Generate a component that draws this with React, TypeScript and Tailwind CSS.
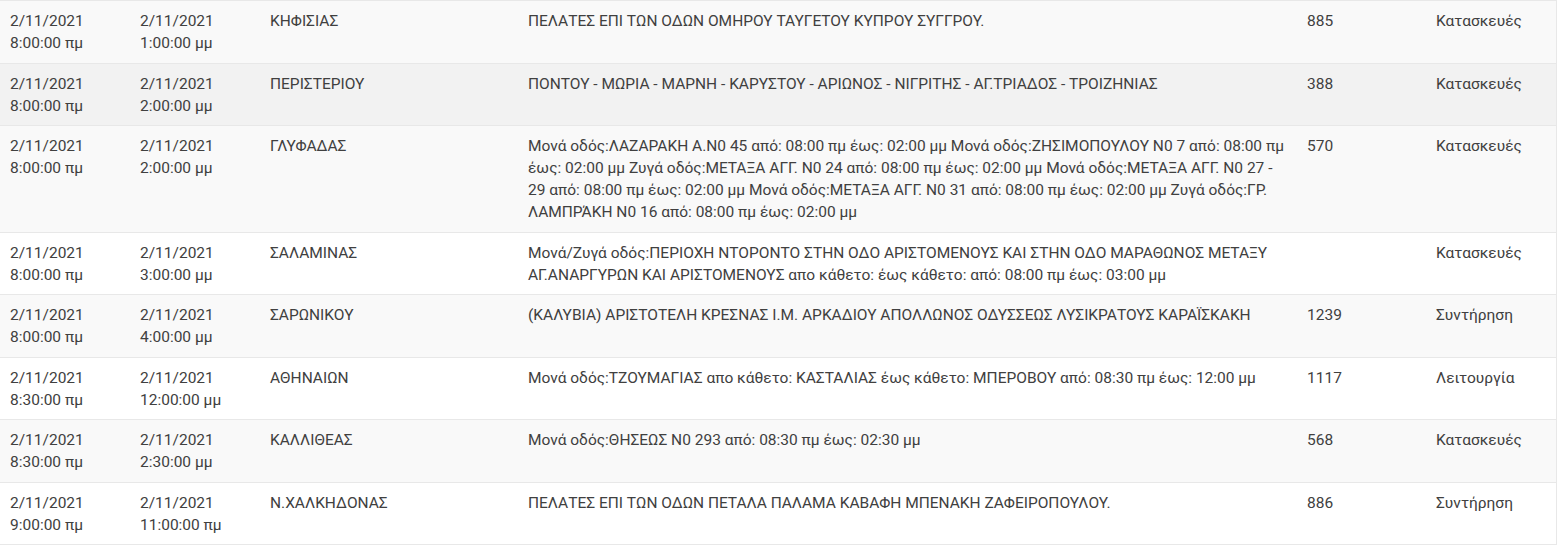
type Row = {
  start: [string, string];
  end: [string, string];
  area: string;
  desc: string;
  count: string;
  kind: string;
};

const rows: Row[] = [
  {
    start: ["2/11/2021", "8:00:00 πμ"],
    end: ["2/11/2021", "1:00:00 μμ"],
    area: "ΚΗΦΙΣΙΑΣ",
    desc: "ΠΕΛΑΤΕΣ ΕΠΙ ΤΩΝ ΟΔΩΝ ΟΜΗΡΟΥ ΤΑΥΓΕΤΟΥ ΚΥΠΡΟΥ ΣΥΓΓΡΟΥ.",
    count: "885",
    kind: "Κατασκευές",
  },
  {
    start: ["2/11/2021", "8:00:00 πμ"],
    end: ["2/11/2021", "2:00:00 μμ"],
    area: "ΠΕΡΙΣΤΕΡΙΟΥ",
    desc: "ΠΟΝΤΟΥ - ΜΩΡΙΑ - ΜΑΡΝΗ - ΚΑΡΥΣΤΟΥ - ΑΡΙΩΝΟΣ - ΝΙΓΡΙΤΗΣ - ΑΓ.ΤΡΙΑΔΟΣ - ΤΡΟΙΖΗΝΙΑΣ",
    count: "388",
    kind: "Κατασκευές",
  },
  {
    start: ["2/11/2021", "8:00:00 πμ"],
    end: ["2/11/2021", "2:00:00 μμ"],
    area: "ΓΛΥΦΑΔΑΣ",
    desc: "Μονά οδός:ΛΑΖΑΡΑΚΗ Α.Ν0 45 από: 08:00 πμ έως: 02:00 μμ Μονά οδός:ΖΗΣΙΜΟΠΟΥΛΟΥ Ν0 7 από: 08:00 πμ έως: 02:00 μμ Ζυγά οδός:ΜΕΤΑΞΑ ΑΓΓ. Ν0 24 από: 08:00 πμ έως: 02:00 μμ Μονά οδός:ΜΕΤΑΞΑ ΑΓΓ. Ν0 27 - 29 από: 08:00 πμ έως: 02:00 μμ Μονά οδός:ΜΕΤΑΞΑ ΑΓΓ. Ν0 31 από: 08:00 πμ έως: 02:00 μμ Ζυγά οδός:ΓΡ. ΛΑΜΠΡΆΚΗ Ν0 16 από: 08:00 πμ έως: 02:00 μμ",
    count: "570",
    kind: "Κατασκευές",
  },
  {
    start: ["2/11/2021", "8:00:00 πμ"],
    end: ["2/11/2021", "3:00:00 μμ"],
    area: "ΣΑΛΑΜΙΝΑΣ",
    desc: "Μονά/Ζυγά οδός:ΠΕΡΙΟΧΗ ΝΤΟΡΟΝΤΟ ΣΤΗΝ ΟΔΟ ΑΡΙΣΤΟΜΕΝΟΥΣ ΚΑΙ ΣΤΗΝ ΟΔΟ ΜΑΡΑΘΩΝΟΣ ΜΕΤΑΞΥ ΑΓ.ΑΝΑΡΓΥΡΩΝ ΚΑΙ ΑΡΙΣΤΟΜΕΝΟΥΣ απο κάθετο: έως κάθετο: από: 08:00 πμ έως: 03:00 μμ",
    count: "",
    kind: "Κατασκευές",
  },
  {
    start: ["2/11/2021", "8:00:00 πμ"],
    end: ["2/11/2021", "4:00:00 μμ"],
    area: "ΣΑΡΩΝΙΚΟΥ",
    desc: "(ΚΑΛΥΒΙΑ) ΑΡΙΣΤΟΤΕΛΗ ΚΡΕΣΝΑΣ Ι.Μ. ΑΡΚΑΔΙΟΥ ΑΠΟΛΛΩΝΟΣ ΟΔΥΣΣΕΩΣ ΛΥΣΙΚΡΑΤΟΥΣ ΚΑΡΑΪΣΚΑΚΗ",
    count: "1239",
    kind: "Συντήρηση",
  },
  {
    start: ["2/11/2021", "8:30:00 πμ"],
    end: ["2/11/2021", "12:00:00 μμ"],
    area: "ΑΘΗΝΑΙΩΝ",
    desc: "Μονά οδός:ΤΖΟΥΜΑΓΙΑΣ απο κάθετο: ΚΑΣΤΑΛΙΑΣ έως κάθετο: ΜΠΕΡΟΒΟΥ από: 08:30 πμ έως: 12:00 μμ",
    count: "1117",
    kind: "Λειτουργία",
  },
  {
    start: ["2/11/2021", "8:30:00 πμ"],
    end: ["2/11/2021", "2:30:00 μμ"],
    area: "ΚΑΛΛΙΘΕΑΣ",
    desc: "Μονά οδός:ΘΗΣΕΩΣ Ν0 293 από: 08:30 πμ έως: 02:30 μμ",
    count: "568",
    kind: "Κατασκευές",
  },
  {
    start: ["2/11/2021", "9:00:00 πμ"],
    end: ["2/11/2021", "11:00:00 πμ"],
    area: "Ν.ΧΑΛΚΗΔΟΝΑΣ",
    desc: "ΠΕΛΑΤΕΣ ΕΠΙ ΤΩΝ ΟΔΩΝ ΠΕΤΑΛΑ ΠΑΛΑΜΑ ΚΑΒΑΦΗ ΜΠΕΝΑΚΗ ΖΑΦΕΙΡΟΠΟΥΛΟΥ.",
    count: "886",
    kind: "Συντήρηση",
  },
];

const cell = "align-top px-[10px] pt-[9px] pb-[8.5px]";

export default function App() {
  return (
    <div className="bg-white w-[1561px] h-[548px] overflow-hidden font-['Roboto',sans-serif] text-[15.5px] leading-[22px] text-[#404040]">
      <table className="table-fixed border-collapse w-[1557px] border-r border-t border-[#e8e8e8]">
        <colgroup>
          <col className="w-[130px]" />
          <col className="w-[130px]" />
          <col className="w-[258px]" />
          <col className="w-[779px]" />
          <col className="w-[129px]" />
          <col />
        </colgroup>
        <tbody>
          {rows.map((r, i) => (
            <tr
              key={i}
              className={`border-b border-[#e8e8e8] ${
                i === 1 ? "bg-[#f2f2f2]" : i % 2 === 0 ? "bg-[#f9f9f9]" : "bg-white"
              }`}
            >
              <td className={cell}>
                {r.start[0]}
                <br />
                {r.start[1]}
              </td>
              <td className={cell}>
                {r.end[0]}
                <br />
                {r.end[1]}
              </td>
              <td className={cell}>{r.area}</td>
              <td className={cell}>{r.desc}</td>
              <td className={cell}>{r.count}</td>
              <td className={cell}>{r.kind}</td>
            </tr>
          ))}
        </tbody>
      </table>
    </div>
  );
}
